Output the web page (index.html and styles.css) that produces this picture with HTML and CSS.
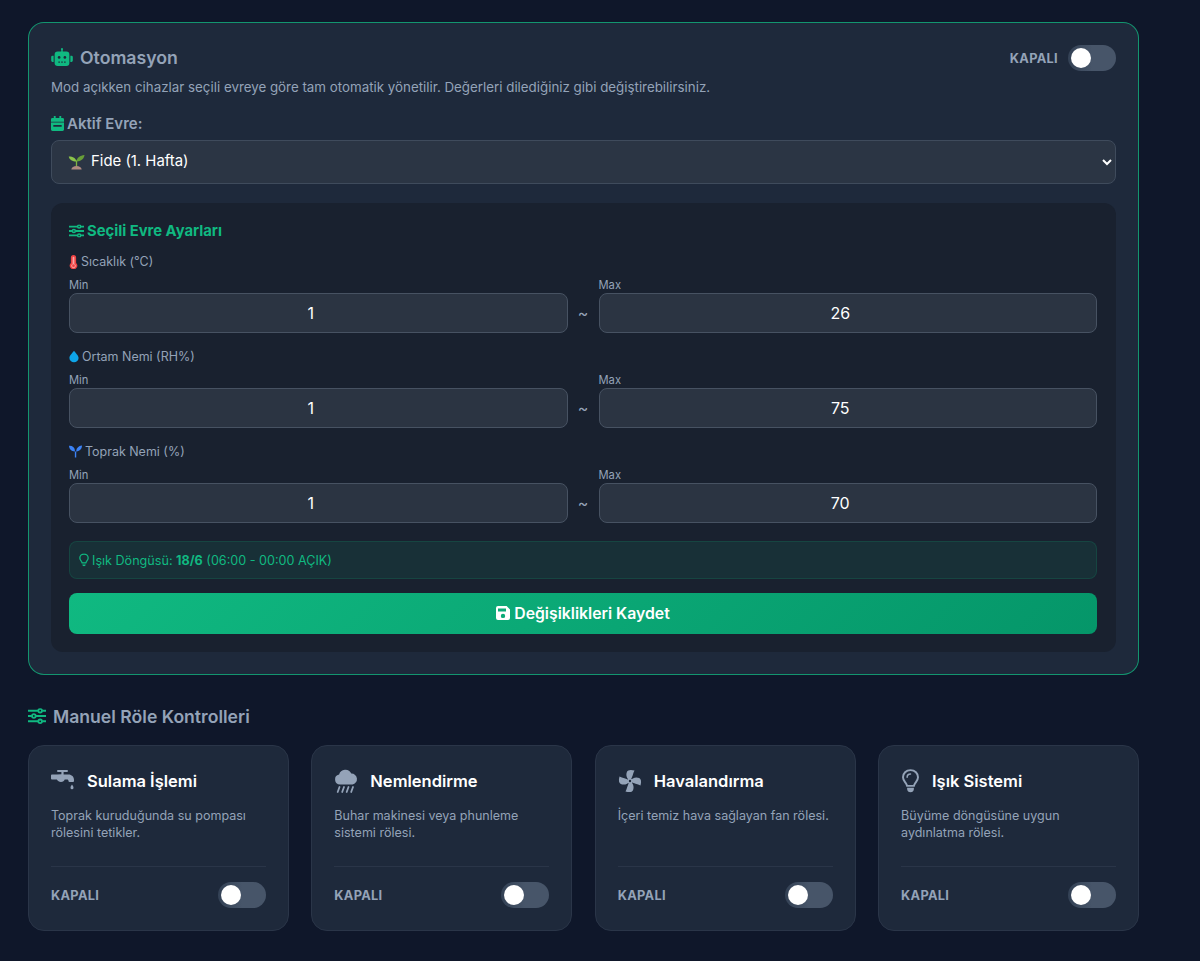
FILE: index.html
```html
<!DOCTYPE html>
<html lang="tr">
<head>
  <meta charset="utf-8">
  <title>Otomasyon</title>
  <link rel="stylesheet" href="styles.css">
</head>
<body>
  <main class="page">
    <section class="auto-card">
      <div class="auto-head">
        <h2 class="auto-title">
          <svg class="icon-robot" viewBox="0 0 24 20"><path d="M12 0a1.2 1.2 0 0 1 .8 2.1V4h4a3.4 3.4 0 0 1 3.4 3.4v9.2A3.4 3.4 0 0 1 16.800 20H7.200a3.400 3.400 0 0 1-3.400-3.400V7.400A3.400 3.400 0 0 1 7.200 4h4V2.100A1.200 1.200 0 0 1 12 0z" fill="#10b981"/><path d="M1.500 8.500h1.200v7H1.500A1.500 1.500 0 0 1 0 14v-4a1.500 1.500 0 0 1 1.500-1.500zM21.300 8.500h1.200A1.500 1.500 0 0 1 24 10v4a1.500 1.500 0 0 1-1.500 1.500h-1.200z" fill="#10b981"/><circle cx="8.800" cy="10.500" r="1.500" fill="#1e293b"/><circle cx="15.200" cy="10.500" r="1.500" fill="#1e293b"/><path d="M8 15h1.600v1.400H8zM11.200 15h1.600v1.400h-1.600zM14.400 15H16v1.400h-1.600z" fill="#1e293b"/></svg>
          <span class="auto-title-text">Otomasyon</span>
        </h2>
        <div class="auto-switch">
          <span class="state">KAPALI</span>
          <span class="toggle"><span class="knob"></span></span>
        </div>
      </div>
      <p class="auto-desc">Mod açıkken cihazlar seçili evreye göre tam otomatik yönetilir. Değerleri dilediğiniz gibi değiştirebilirsiniz.</p>

      <div class="stage-label">
        <svg class="icon-cal" viewBox="0 0 14 16"><path d="M3 0h2v2h4V0h2v2h1.500A1.500 1.500 0 0 1 14 3.500V6H0V3.500A1.500 1.500 0 0 1 1.500 2H3zM0 7h14v7.500a1.500 1.500 0 0 1-1.500 1.500h-11A1.500 1.500 0 0 1 0 14.500zm2.500 2.500v2h9v-2z" fill="#10b981"/></svg>
        Aktif Evre:
      </div>
      <div class="stage-select">
        <svg class="icon-seedling" viewBox="0 0 18 18"><path d="M9 9C8.500 5.500 5 3.500 0.800 3.600 1.500 7 4.500 9 9 9z" fill="#8bc34a"/><path d="M9 8c.5-3 3.500-5.500 8.500-6C17 6 14 8.500 9 9z" fill="#689f38"/><path d="M8.300 8h1.400v6H8.300z" fill="#7cb342"/><path d="M3.500 17.500c.3-2.500 2.500-3.800 5.500-3.800s5.200 1.300 5.500 3.800z" fill="#b08a80"/></svg>
        <select class="stage-input">
          <option>Fide (1. Hafta)</option>
          <option>Vejetatif (2. Hafta)</option>
          <option>Çiçeklenme (3. Hafta)</option>
        </select>
      </div>

      <div class="settings">
        <h3 class="settings-title">
          <svg class="icon-sliders" viewBox="0 0 16 14"><use href="#sliders"/></svg>
          Seçili Evre Ayarları
        </h3>

        <div class="range-group">
          <div class="range-name">
            <svg class="icon-temp" viewBox="0 0 10 16"><path d="M5 0a3 3 0 0 1 3 3v6.200a4.200 4.200 0 1 1-6 0V3a3 3 0 0 1 3-3z" fill="#ef4444"/><path d="M5 2a1 1 0 0 1 1 1v7.300a2.400 2.400 0 1 1-2 0V3a1 1 0 0 1 1-1z" fill="#fca5a5"/><circle cx="5" cy="12.300" r="1.600" fill="#ef4444"/></svg>
            Sıcaklık (°C)
          </div>
          <div class="range-row">
            <label class="range-field"><span>Min</span><input type="number" value="1"></label>
            <span class="tilde">~</span>
            <label class="range-field"><span>Max</span><input type="number" value="26"></label>
          </div>
        </div>

        <div class="range-group">
          <div class="range-name">
            <svg class="icon-drop" viewBox="0 0 12 14"><path d="M6 0c1.500 2.400 5.500 5.500 5.500 8.700A5.400 5.400 0 0 1 6 14 5.400 5.400 0 0 1 .5 8.700C.5 5.500 4.500 2.400 6 0z" fill="#0ea5e9"/></svg>
            Ortam Nemi (RH%)
          </div>
          <div class="range-row">
            <label class="range-field"><span>Min</span><input type="number" value="1"></label>
            <span class="tilde">~</span>
            <label class="range-field"><span>Max</span><input type="number" value="75"></label>
          </div>
        </div>

        <div class="range-group">
          <div class="range-name">
            <svg class="icon-sprout" viewBox="0 0 14 14"><path d="M0 .8c3.500-.3 6 1.500 6.300 4.700v8h1.500V6.200C8.300 4.900 8 4.600 8.700 3.600 10 1.800 11.800.6 14 .6c0 3.400-2.200 6-6 6.300H6.300C2.500 6.900.2 4.300 0 .8z" fill="#3b82f6"/></svg>
            Toprak Nemi (%)
          </div>
          <div class="range-row">
            <label class="range-field"><span>Min</span><input type="number" value="1"></label>
            <span class="tilde">~</span>
            <label class="range-field"><span>Max</span><input type="number" value="70"></label>
          </div>
        </div>

        <div class="light-note">
          <svg class="icon-note-bulb" viewBox="0 0 24 32"><use href="#bulb"/></svg>
          <span>Işık Döngüsü: <b>18/6</b> (06:00 - 00:00 AÇIK)</span>
        </div>

        <button class="save-btn" type="button">
          <svg class="icon-save" viewBox="0 0 14 14"><path d="M2 0h8.600L14 3.400V12a2 2 0 0 1-2 2H2a2 2 0 0 1-2-2V2a2 2 0 0 1 2-2zm0 2.500v3h8v-3zM7 7.700a2.200 2.200 0 1 0 0 4.400 2.200 2.200 0 0 0 0-4.400z" fill="#fff" fill-rule="evenodd"/></svg>
          Değişiklikleri Kaydet
        </button>
      </div>
    </section>

    <h2 class="manual-title">
      <svg class="icon-manual" viewBox="0 0 16 14"><use href="#sliders"/></svg>
      Manuel Röle Kontrolleri
    </h2>

    <section class="relay-grid">
      <article class="relay-card">
        <div class="relay-head">
          <svg class="relay-icon" viewBox="0 0 24 24"><path d="M7 1h9a1 1 0 0 1 0 2h-3.400v2.500h4.900c3.200 0 5.500 2.300 5.500 5.500v1a1 1 0 0 1-1 1h-3.500a1 1 0 0 1-1-1c0-.9-.5-1.500-1.500-1.500h-2.300C13.200 12 12 13 10 13s-3.200-1-4.200-2.500H.9A.9.9 0 0 1 0 9.600V6.500a.9.900 0 0 1 .9-.9h5l4.500-.3V3H7a1 1 0 0 1 0-2z" fill="#94a3b8"/><path d="M21 15.500c.6 1 1.500 2 1.500 3.200a1.500 1.500 0 0 1-3 0c0-1.200.9-2.200 1.500-3.200z" fill="#94a3b8"/></svg>
          <h3>Sulama İşlemi</h3>
        </div>
        <p>Toprak kuruduğunda su pompası rölesini tetikler.</p>
        <div class="relay-foot">
          <span class="state">KAPALI</span>
          <span class="toggle"><span class="knob"></span></span>
        </div>
      </article>

      <article class="relay-card">
        <div class="relay-head">
          <svg class="relay-icon" viewBox="0 0 24 24"><path d="M6 15.500a5 5 0 0 1-.9-9.900A6.500 6.500 0 0 1 17.300 4.600 5.500 5.500 0 0 1 18.500 15.500z" fill="#94a3b8"/><path d="M5.500 18l-1.800 5M10 18l-1.800 5M14.500 18l-1.800 5M19 18l-1.800 5" stroke="#94a3b8" stroke-width="1.800" stroke-linecap="round" fill="none"/></svg>
          <h3>Nemlendirme</h3>
        </div>
        <p>Buhar makinesi veya phunleme sistemi rölesi.</p>
        <div class="relay-foot">
          <span class="state">KAPALI</span>
          <span class="toggle"><span class="knob"></span></span>
        </div>
      </article>

      <article class="relay-card">
        <div class="relay-head">
          <svg class="relay-icon" viewBox="0 0 24 24">
            <path d="M12 12C8.800 9.800 7.500 6 9 2.800 9.800 1 12.500.3 16.500 1.500 14.800 4.500 14.800 8 12 12z" fill="#94a3b8"/>
            <path d="M12 12C8.800 9.800 7.500 6 9 2.800 9.800 1 12.500.3 16.500 1.500 14.800 4.500 14.800 8 12 12z" transform="rotate(90 12 12)" fill="#94a3b8"/>
            <path d="M12 12C8.800 9.800 7.500 6 9 2.800 9.800 1 12.500.3 16.500 1.500 14.800 4.500 14.800 8 12 12z" transform="rotate(180 12 12)" fill="#94a3b8"/>
            <path d="M12 12C8.800 9.800 7.500 6 9 2.800 9.800 1 12.500.3 16.500 1.500 14.800 4.500 14.800 8 12 12z" transform="rotate(270 12 12)" fill="#94a3b8"/>
            <circle cx="12" cy="12" r="2.600" fill="#94a3b8"/>
            <circle cx="12" cy="12" r="1.200" fill="#1e293b"/>
          </svg>
          <h3>Havalandırma</h3>
        </div>
        <p>İçeri temiz hava sağlayan fan rölesi.</p>
        <div class="relay-foot">
          <span class="state">KAPALI</span>
          <span class="toggle"><span class="knob"></span></span>
        </div>
      </article>

      <article class="relay-card">
        <div class="relay-head">
          <svg class="relay-icon relay-icon-bulb" viewBox="0 0 24 32"><path d="M12 1.500C6 1.500 2 6 2 11c0 3.800 2.200 5.800 3.800 8 .9 1.300 1.400 2.500 1.600 3.500h9.200c.2-1 .7-2.200 1.600-3.500 1.600-2.200 3.800-4.200 3.800-8 0-5-4-9.500-10-9.500z" stroke="#94a3b8" stroke-width="2.600" fill="none"/><path d="M7.500 11c0-2.500 2-4.500 4.500-4.500" stroke="#94a3b8" stroke-width="2" stroke-linecap="round" fill="none"/><path d="M7.500 25h9v1.500c0 2.500-2 4.500-4.500 4.500s-4.500-2-4.500-4.500z" fill="#94a3b8"/></svg>
          <h3>Işık Sistemi</h3>
        </div>
        <p>Büyüme döngüsüne uygun aydınlatma rölesi.</p>
        <div class="relay-foot">
          <span class="state">KAPALI</span>
          <span class="toggle"><span class="knob"></span></span>
        </div>
      </article>
    </section>
  </main>

  <svg class="defs" aria-hidden="true">
    <symbol id="sliders" viewBox="0 0 16 14">
      <path d="M0 2.300h9M12.600 2.300H16M0 7h3.400M7 7h9M0 11.700h9M12.600 11.700H16" stroke="currentColor" stroke-width="1.900" fill="none"/>
      <circle cx="10.800" cy="2.300" r="1.600" stroke="currentColor" stroke-width="1.600" fill="none"/>
      <circle cx="5.200" cy="7" r="1.600" stroke="currentColor" stroke-width="1.600" fill="none"/>
      <circle cx="10.800" cy="11.700" r="1.600" stroke="currentColor" stroke-width="1.600" fill="none"/>
    </symbol>
    <symbol id="bulb" viewBox="0 0 24 32">
      <path d="M12 2C6 2 2 6.300 2 11.200c0 3.800 2.200 5.800 3.800 8 1 1.300 1.500 2.500 1.700 3.800h9c.2-1.300.7-2.500 1.700-3.800 1.600-2.200 3.800-4.200 3.800-8C22 6.300 18 2 12 2z" stroke="currentColor" stroke-width="3" fill="none"/>
      <path d="M8 27h8c0 2.500-1.800 4-4 4s-4-1.500-4-4z" fill="currentColor"/>
    </symbol>
  </svg>
</body>
</html>
```

FILE: styles.css
```css
* {
  box-sizing: border-box;
}

body {
  margin: 0;
  min-height: 961px;
  background: #0f172a;
  color: #f8fafc;
  font-family: "Inter", "Liberation Sans", sans-serif;
  overflow: hidden;
}

.page {
  width: 1111px;
  margin-left: 28px;
  padding-top: 22px;
}

.defs {
  display: none;
}

svg {
  flex: none;
  display: block;
}

/* automation card */
.auto-card {
  height: 653px;
  padding: 22px;
  background: #1e293b;
  border: 1px solid rgba(16, 185, 129, 0.75);
  border-radius: 16px;
}

.auto-head {
  display: flex;
  justify-content: space-between;
  align-items: center;
  height: 26px;
  margin-bottom: 6px;
}

.auto-title {
  display: flex;
  align-items: center;
  gap: 7px;
  height: 24px;
  margin: 0 0 2px;
  font-size: 17.700px;
  font-weight: 600;
  color: #94a3b8;
}

.icon-robot {
  width: 22px;
  height: 18px;
}

.auto-switch {
  display: flex;
  align-items: center;
  gap: 10px;
}

.state {
  font-size: 12.800px;
  font-weight: 700;
  letter-spacing: 0.3px;
  color: #94a3b8;
}

.toggle {
  display: block;
  width: 48px;
  height: 26px;
  padding: 3px;
  background: linear-gradient(90deg, #334155 0, #475569 50%);
  border-radius: 13px;
}

.knob {
  display: block;
  width: 20px;
  height: 20px;
  background: #fff;
  border-radius: 50%;
}

.auto-desc {
  margin: 0 0 16px;
  font-size: 13.340px;
  line-height: 20px;
  color: #94a3b8;
}

.stage-label {
  display: flex;
  align-items: center;
  gap: 3px;
  height: 20px;
  margin-bottom: 7px;
  font-size: 15px;
  font-weight: 600;
  color: #94a3b8;
}

.icon-cal {
  width: 13px;
  height: 15px;
}

.stage-select {
  position: relative;
  margin-bottom: 19px;
}

.icon-seedling {
  position: absolute;
  left: 17px;
  top: 13px;
  width: 17px;
  height: 17px;
}

.stage-input {
  display: block;
  width: 100%;
  height: 44px;
  padding: 0 4px 2px 35px;
  background: #2b3544;
  border: 1px solid #3f4b5c;
  border-radius: 8px;
  color: #fff;
  font-family: inherit;
  font-size: 14.900px;
  font-weight: 400;
}

/* selected stage settings */
.settings {
  height: 449px;
  padding: 18px 19px 18px 18px;
  background: #19212f;
  border-radius: 12px;
}

.settings-title {
  display: flex;
  align-items: center;
  gap: 3px;
  height: 20px;
  margin: 0 0 12.500px;
  font-size: 14.800px;
  font-weight: 700;
  color: #10b981;
}

.icon-sliders {
  width: 15px;
  height: 14px;
  color: #10b981;
}

.range-group {
  margin-bottom: 15.300px;
}

.range-name {
  display: flex;
  align-items: center;
  gap: 3px;
  height: 16px;
  margin-bottom: 8.500px;
  font-size: 12.480px;
  color: #94a3b8;
}

.icon-temp {
  width: 9px;
  height: 14px;
}

.icon-drop {
  width: 10px;
  height: 13px;
}

.icon-sprout {
  width: 13px;
  height: 13px;
}

.range-row {
  display: flex;
  align-items: flex-end;
  gap: 10px;
}

.range-field {
  flex: 1;
  display: block;
}

.range-field span {
  display: block;
  height: 14px;
  margin-bottom: 1px;
  font-size: 11.200px;
  line-height: 14px;
  color: #94a3b8;
}

.range-field input {
  display: block;
  width: 100%;
  height: 40px;
  background: #2b3442;
  border: 1px solid #475262;
  border-radius: 8px;
  color: #fff;
  font-family: inherit;
  font-size: 16px;
  font-weight: 400;
  text-align: center;
}

.tilde {
  width: 11px;
  line-height: 40px;
  font-size: 16px;
  text-align: center;
  color: #94a3b8;
}

.light-note {
  display: flex;
  align-items: center;
  gap: 3px;
  height: 38px;
  margin-top: 18.500px;
  margin-bottom: 14px;
  padding-left: 9px;
  background: rgba(16, 185, 129, 0.1);
  border: 1px solid rgba(16, 185, 129, 0.15);
  border-radius: 8px;
  font-size: 12.600px;
  color: #10b981;
}

.icon-note-bulb {
  width: 10px;
  height: 14px;
}

.save-btn {
  display: flex;
  justify-content: center;
  align-items: center;
  gap: 4px;
  width: 100%;
  height: 40.500px;
  background: linear-gradient(135deg, #10b981, #059669);
  border: 0;
  border-radius: 8px;
  color: #fff;
  font-family: inherit;
  font-size: 15.800px;
  font-weight: 600;
}

.icon-save {
  width: 14px;
  height: 14px;
}

/* manual relays */
.manual-title {
  display: flex;
  align-items: center;
  gap: 7px;
  height: 22px;
  margin: 30px 0 18px;
  font-size: 17.600px;
  font-weight: 600;
  color: #94a3b8;
}

.icon-manual {
  width: 18px;
  height: 16px;
  color: #10b981;
}

.relay-grid {
  display: grid;
  grid-template-columns: repeat(4, 1fr);
  gap: 22.400px;
}

.relay-card {
  height: 186px;
  padding: 22px;
  background: #1e293b;
  border: 1px solid #2a3548;
  border-radius: 16px;
}

.relay-head {
  display: flex;
  align-items: center;
  gap: 12px;
  height: 26px;
  margin-bottom: 13px;
}

.relay-icon {
  width: 24px;
  height: 24px;
}

.relay-icon-bulb {
  width: 19px;
}

.relay-head h3 {
  margin: 0;
  font-size: 16.500px;
  font-weight: 600;
  color: #fff;
}

.relay-card p {
  height: 59px;
  margin: 0;
  font-size: 12.540px;
  line-height: 17px;
  color: #94a3b8;
}

.relay-foot {
  display: flex;
  justify-content: space-between;
  align-items: center;
  padding-top: 15px;
  border-top: 1px solid #2a3548;
}
```
